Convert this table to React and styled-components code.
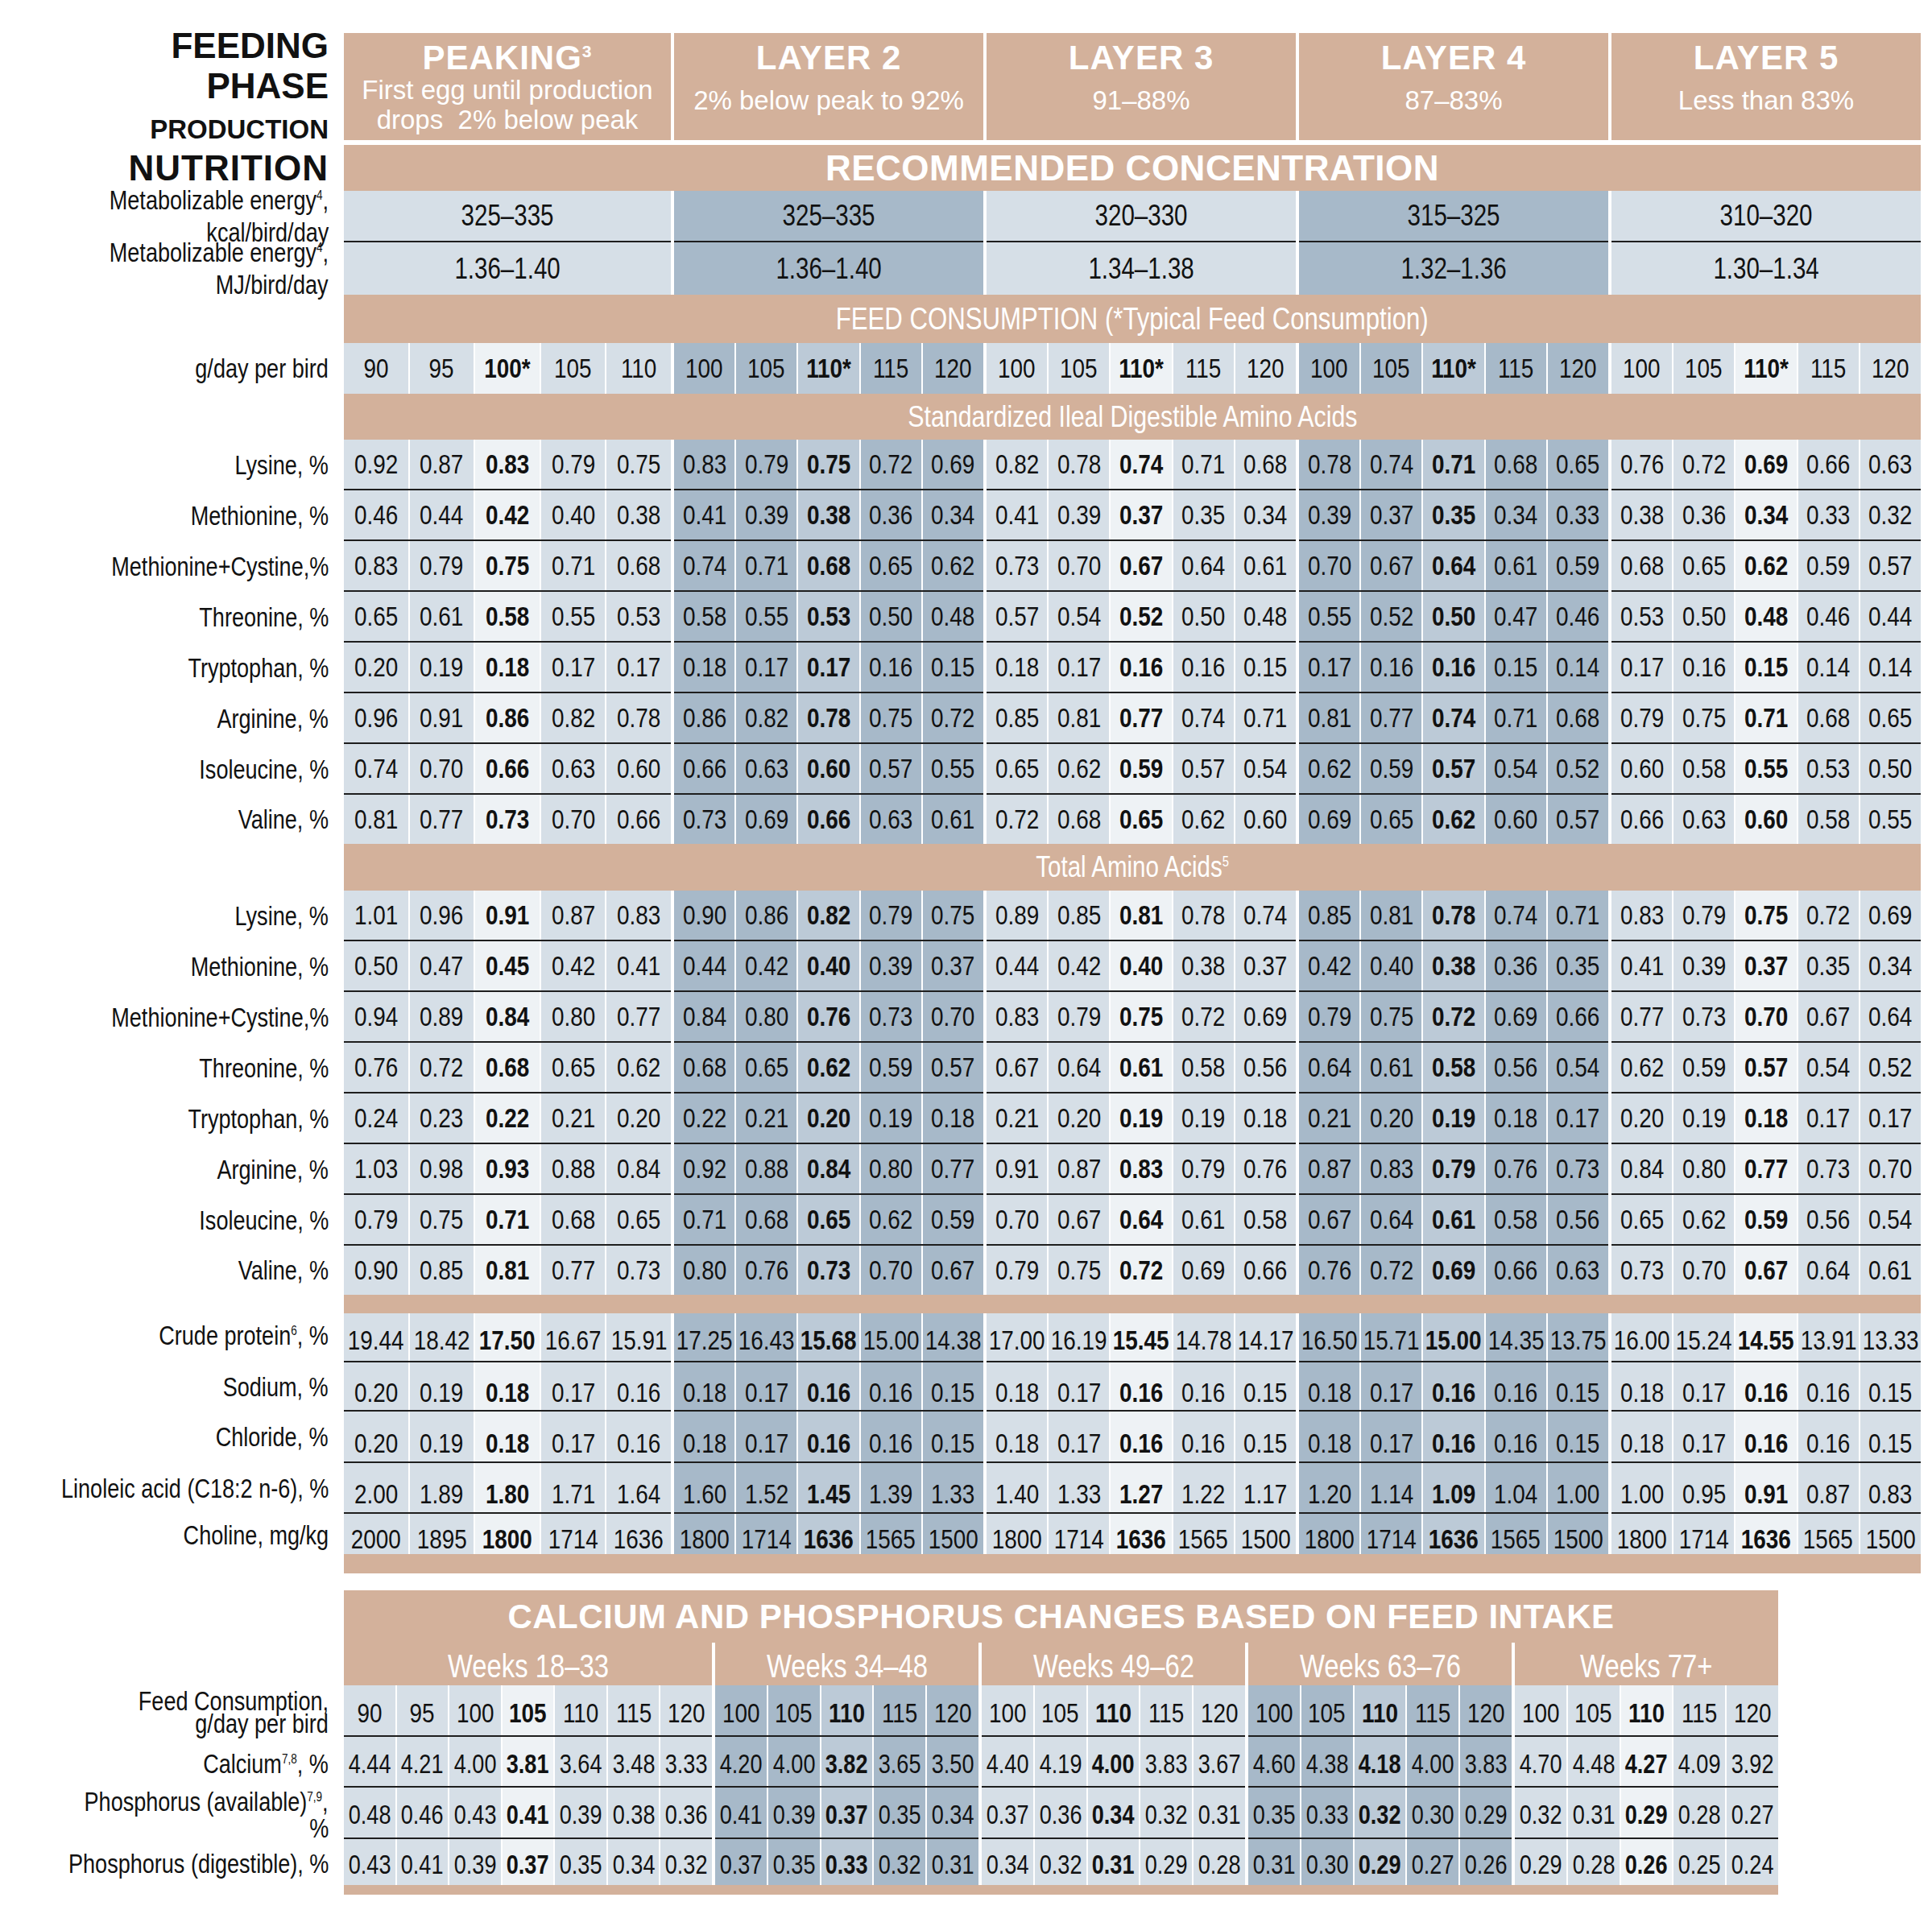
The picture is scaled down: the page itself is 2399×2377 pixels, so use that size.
import React from 'react';
import styled, { createGlobalStyle } from 'styled-components';

// no condensed face is installed, so the narrow look comes from a horizontal squeeze
const sans = '"Liberation Sans", Arial, sans-serif';

const BROWN = '#d3b19b';
const TONES = {
  light: '#d6dfe7',
  lightHi: '#eef2f5',
  dark: '#a7b9c9',
  darkHi: '#bccad7',
};

const GlobalStyle = createGlobalStyle`
  html, body {
    margin: 0;
    padding: 0;
    background: #fff;
  }
  body {
    font-family: ${sans};
    color: #111;
  }
`;

const Page = styled.div`
  width: 2399px;
  padding: 41px 0 24px;
  box-sizing: border-box;
`;

const MainGrid = styled.div`
  display: grid;
  grid-template-columns: 423px 406px repeat(4, 384px);
  column-gap: 4px;
`;

const MineralGrid = styled.div`
  display: grid;
  grid-template-columns: 423px 457px repeat(4, 327px);
  column-gap: 4px;
  margin-top: 21px;
`;

const Spacer = styled.div`
  grid-column: 1 / -1;
  height: ${(p) => p.$h}px;
`;

const Squeeze = styled.span`
  display: inline-block;
  white-space: nowrap;
  transform: translateY(${(p) => p.$dy || 0}px) scaleX(${(p) => p.$x || 0.82});
  transform-origin: ${(p) => p.$origin || 'center'};
`;

const Label = styled.div`
  height: ${(p) => (p.$h ? `${p.$h}px` : 'auto')};
  display: flex;
  flex-direction: column;
  align-items: flex-end;
  justify-content: center;
  padding-right: 15px;
  text-align: right;
  font-size: 33px;
  line-height: ${(p) => p.$lh || 40}px;
  color: #111;
  white-space: nowrap;
`;

const PhaseLabel = styled.div`
  height: 133px;
  padding-right: 15px;
  text-align: right;
  font-weight: 700;
  color: #111;
  white-space: nowrap;
`;

const BigWords = styled.div`
  font-size: 44px;
  line-height: 50px;
  margin-top: -9px;
`;

const SmallWord = styled.div`
  font-size: 33px;
  line-height: 40px;
  margin-top: 9px;
`;

const NutritionLabel = styled.div`
  height: 57px;
  padding-right: 15px;
  text-align: right;
  font-weight: 700;
  font-size: 44px;
  letter-spacing: 1px;
  line-height: 57px;
  color: #111;
`;

const Sup = styled.sup`
  font-size: 0.5em;
  line-height: 0;
  vertical-align: 0.72em;
`;

const PhaseHead = styled.div`
  height: 133px;
  box-sizing: border-box;
  padding-top: 10px;
  background: ${BROWN};
  color: #fff;
  display: flex;
  flex-direction: column;
  align-items: center;
  text-align: center;
`;

const PhaseTitle = styled.div`
  font-weight: 700;
  font-size: 42px;
  line-height: 42px;
  letter-spacing: 1px;
`;

const PhaseSub = styled.div`
  font-size: 33px;
  line-height: 37px;
  white-space: pre;
  margin-top: ${(p) => (p.$single ? 13 : 0)}px;
`;

const Band = styled.div`
  grid-column: 2 / -1;
  height: ${(p) => p.$h}px;
  background: ${BROWN};
  color: #fff;
  display: flex;
  align-items: center;
  justify-content: center;
  white-space: nowrap;
`;

const BandBold = styled.span`
  font-weight: 700;
  font-size: ${(p) => p.$size || 44}px;
  letter-spacing: 0.5px;
`;

const BandLight = styled(Squeeze)`
  font-size: ${(p) => p.$size || 37}px;
`;

const WeekHead = styled.div`
  height: 53px;
  background: ${BROWN};
  color: #fff;
  display: flex;
  align-items: center;
  justify-content: center;
  font-size: 40px;
`;

const Group = styled.div`
  display: grid;
  grid-template-columns: repeat(${(p) => p.$cols}, 1fr);
  column-gap: 2px;
  height: ${(p) => p.$h}px;
  box-sizing: border-box;
  border-bottom: ${(p) => (p.$line ? '2px solid #1e1e1e' : 'none')};
  background: #fff;
`;

const Cell = styled.div`
  min-width: 0;
  background: ${(p) => TONES[p.$tone]};
  display: flex;
  align-items: center;
  justify-content: center;
  font-size: ${(p) => p.$size || 34}px;
  font-weight: ${(p) => (p.$bold ? 700 : 400)};
  color: #111;
  white-space: nowrap;
`;

const PHASES = [
  { title: 'PEAKING', sup: '3', sub: ['First egg until production', 'drops\u00a0 2% below peak'] },
  { title: 'LAYER 2', sub: ['2% below peak to 92%'] },
  { title: 'LAYER 3', sub: ['91–88%'] },
  { title: 'LAYER 4', sub: ['87–83%'] },
  { title: 'LAYER 5', sub: ['Less than 83%'] },
];

const PHASE_GROUPS = [
  { cols: 5, tone: 'light', hi: 2, bold: 2 },
  { cols: 5, tone: 'dark', hi: 2, bold: 2 },
  { cols: 5, tone: 'light', hi: 2, bold: 2 },
  { cols: 5, tone: 'dark', hi: 2, bold: 2 },
  { cols: 5, tone: 'light', hi: 2, bold: 2 },
];

const WEEK_GROUPS = [
  { cols: 7, tone: 'light', hi: 3, bold: 3, title: 'Weeks 18–33' },
  { cols: 5, tone: 'dark', hi: 2, bold: 2, title: 'Weeks 34–48' },
  { cols: 5, tone: 'light', hi: -1, bold: 2, title: 'Weeks 49–62' },
  { cols: 5, tone: 'dark', hi: 2, bold: 2, title: 'Weeks 63–76' },
  { cols: 5, tone: 'light', hi: 2, bold: 2, title: 'Weeks 77+' },
];

const parse = (s) => s.split('|').map((g) => g.trim().split(/\s+/));

const FEED = parse('90 95 100* 105 110 | 100 105 110* 115 120 | 100 105 110* 115 120 | 100 105 110* 115 120 | 100 105 110* 115 120');

const SID = [
  ['Lysine, %', '0.92 0.87 0.83 0.79 0.75 | 0.83 0.79 0.75 0.72 0.69 | 0.82 0.78 0.74 0.71 0.68 | 0.78 0.74 0.71 0.68 0.65 | 0.76 0.72 0.69 0.66 0.63'],
  ['Methionine, %', '0.46 0.44 0.42 0.40 0.38 | 0.41 0.39 0.38 0.36 0.34 | 0.41 0.39 0.37 0.35 0.34 | 0.39 0.37 0.35 0.34 0.33 | 0.38 0.36 0.34 0.33 0.32'],
  ['Methionine+Cystine,%', '0.83 0.79 0.75 0.71 0.68 | 0.74 0.71 0.68 0.65 0.62 | 0.73 0.70 0.67 0.64 0.61 | 0.70 0.67 0.64 0.61 0.59 | 0.68 0.65 0.62 0.59 0.57'],
  ['Threonine, %', '0.65 0.61 0.58 0.55 0.53 | 0.58 0.55 0.53 0.50 0.48 | 0.57 0.54 0.52 0.50 0.48 | 0.55 0.52 0.50 0.47 0.46 | 0.53 0.50 0.48 0.46 0.44'],
  ['Tryptophan, %', '0.20 0.19 0.18 0.17 0.17 | 0.18 0.17 0.17 0.16 0.15 | 0.18 0.17 0.16 0.16 0.15 | 0.17 0.16 0.16 0.15 0.14 | 0.17 0.16 0.15 0.14 0.14'],
  ['Arginine, %', '0.96 0.91 0.86 0.82 0.78 | 0.86 0.82 0.78 0.75 0.72 | 0.85 0.81 0.77 0.74 0.71 | 0.81 0.77 0.74 0.71 0.68 | 0.79 0.75 0.71 0.68 0.65'],
  ['Isoleucine, %', '0.74 0.70 0.66 0.63 0.60 | 0.66 0.63 0.60 0.57 0.55 | 0.65 0.62 0.59 0.57 0.54 | 0.62 0.59 0.57 0.54 0.52 | 0.60 0.58 0.55 0.53 0.50'],
  ['Valine, %', '0.81 0.77 0.73 0.70 0.66 | 0.73 0.69 0.66 0.63 0.61 | 0.72 0.68 0.65 0.62 0.60 | 0.69 0.65 0.62 0.60 0.57 | 0.66 0.63 0.60 0.58 0.55'],
];

const TOTAL = [
  ['Lysine, %', '1.01 0.96 0.91 0.87 0.83 | 0.90 0.86 0.82 0.79 0.75 | 0.89 0.85 0.81 0.78 0.74 | 0.85 0.81 0.78 0.74 0.71 | 0.83 0.79 0.75 0.72 0.69'],
  ['Methionine, %', '0.50 0.47 0.45 0.42 0.41 | 0.44 0.42 0.40 0.39 0.37 | 0.44 0.42 0.40 0.38 0.37 | 0.42 0.40 0.38 0.36 0.35 | 0.41 0.39 0.37 0.35 0.34'],
  ['Methionine+Cystine,%', '0.94 0.89 0.84 0.80 0.77 | 0.84 0.80 0.76 0.73 0.70 | 0.83 0.79 0.75 0.72 0.69 | 0.79 0.75 0.72 0.69 0.66 | 0.77 0.73 0.70 0.67 0.64'],
  ['Threonine, %', '0.76 0.72 0.68 0.65 0.62 | 0.68 0.65 0.62 0.59 0.57 | 0.67 0.64 0.61 0.58 0.56 | 0.64 0.61 0.58 0.56 0.54 | 0.62 0.59 0.57 0.54 0.52'],
  ['Tryptophan, %', '0.24 0.23 0.22 0.21 0.20 | 0.22 0.21 0.20 0.19 0.18 | 0.21 0.20 0.19 0.19 0.18 | 0.21 0.20 0.19 0.18 0.17 | 0.20 0.19 0.18 0.17 0.17'],
  ['Arginine, %', '1.03 0.98 0.93 0.88 0.84 | 0.92 0.88 0.84 0.80 0.77 | 0.91 0.87 0.83 0.79 0.76 | 0.87 0.83 0.79 0.76 0.73 | 0.84 0.80 0.77 0.73 0.70'],
  ['Isoleucine, %', '0.79 0.75 0.71 0.68 0.65 | 0.71 0.68 0.65 0.62 0.59 | 0.70 0.67 0.64 0.61 0.58 | 0.67 0.64 0.61 0.58 0.56 | 0.65 0.62 0.59 0.56 0.54'],
  ['Valine, %', '0.90 0.85 0.81 0.77 0.73 | 0.80 0.76 0.73 0.70 0.67 | 0.79 0.75 0.72 0.69 0.66 | 0.76 0.72 0.69 0.66 0.63 | 0.73 0.70 0.67 0.64 0.61'],
];

// label, values, row height, shift of the numbers, shift of the label
const OTHERS = [
  [<>Crude protein<Sup>6</Sup>, %</>, '19.44 18.42 17.50 16.67 15.91 | 17.25 16.43 15.68 15.00 14.38 | 17.00 16.19 15.45 14.78 14.17 | 16.50 15.71 15.00 14.35 13.75 | 16.00 15.24 14.55 13.91 13.33', 61, 4, -3],
  ['Sodium, %', '0.20 0.19 0.18 0.17 0.16 | 0.18 0.17 0.16 0.16 0.15 | 0.18 0.17 0.16 0.16 0.15 | 0.18 0.17 0.16 0.16 0.15 | 0.18 0.17 0.16 0.16 0.15', 61, 8, 0],
  ['Chloride, %', '0.20 0.19 0.18 0.17 0.16 | 0.18 0.17 0.16 0.16 0.15 | 0.18 0.17 0.16 0.16 0.15 | 0.18 0.17 0.16 0.16 0.15 | 0.18 0.17 0.16 0.16 0.15', 64, 8, 0],
  ['Linoleic acid (C18:2 n-6), %', '2.00 1.89 1.80 1.71 1.64 | 1.60 1.52 1.45 1.39 1.33 | 1.40 1.33 1.27 1.22 1.17 | 1.20 1.14 1.09 1.04 1.00 | 1.00 0.95 0.91 0.87 0.83', 63, 8, 0],
  ['Choline, mg/kg', '2000 1895 1800 1714 1636 | 1800 1714 1636 1565 1500 | 1800 1714 1636 1565 1500 | 1800 1714 1636 1565 1500 | 1800 1714 1636 1565 1500', 50, 6, 2],
];

const ENERGY = [
  ['kcal/bird/day', ['325–335', '325–335', '320–330', '315–325', '310–320'], 64, true],
  ['MJ/bird/day', ['1.36–1.40', '1.36–1.40', '1.34–1.38', '1.32–1.36', '1.30–1.34'], 65, false],
];

const MINERALS = [
  [['Feed Consumption,', 'g/day per bird'], '90 95 100 105 110 115 120 | 100 105 110 115 120 | 100 105 110 115 120 | 100 105 110 115 120 | 100 105 110 115 120', 64, true, 28],
  [[<>Calcium<Sup>7,8</Sup>, %</>], '4.44 4.21 4.00 3.81 3.64 3.48 3.33 | 4.20 4.00 3.82 3.65 3.50 | 4.40 4.19 4.00 3.83 3.67 | 4.60 4.38 4.18 4.00 3.83 | 4.70 4.48 4.27 4.09 3.92', 63, true, 40],
  [[<>Phosphorus (available)<Sup>7,9</Sup>,</>, '%'], '0.48 0.46 0.43 0.41 0.39 0.38 0.36 | 0.41 0.39 0.37 0.35 0.34 | 0.37 0.36 0.34 0.32 0.31 | 0.35 0.33 0.32 0.30 0.29 | 0.32 0.31 0.29 0.28 0.27', 64, true, 33],
  [['Phosphorus (digestible), %'], '0.43 0.41 0.39 0.37 0.35 0.34 0.32 | 0.37 0.35 0.33 0.32 0.31 | 0.34 0.32 0.31 0.29 0.28 | 0.31 0.30 0.29 0.27 0.26 | 0.29 0.28 0.26 0.25 0.24', 57, false, 40],
];

function RowLabel({ lines, h, lh, dy }) {
  const list = Array.isArray(lines) ? lines : [lines];
  return (
    <Label $h={h} $lh={lh}>
      {list.map((l, i) => (
        <Squeeze key={i} $origin="right" $dy={dy}>
          {l}
        </Squeeze>
      ))}
    </Label>
  );
}

function DataRow({ label, values, groups = PHASE_GROUPS, h = 63, line = true, size = 34, lh, dy = 0, ldy = 0 }) {
  return (
    <>
      <RowLabel lines={label} h={h} lh={lh} dy={ldy} />
      {groups.map((g, gi) => (
        <Group key={gi} $cols={g.cols} $h={h} $line={line}>
          {values[gi].map((v, ci) => (
            <Cell
              key={ci}
              $tone={ci === g.hi ? `${g.tone}Hi` : g.tone}
              $bold={ci === g.bold}
              $size={size}
            >
              <Squeeze $dy={dy}>{v}</Squeeze>
            </Cell>
          ))}
        </Group>
      ))}
    </>
  );
}

function EnergyRow({ unit, values, h, line }) {
  return (
    <>
      <RowLabel lines={[<>Metabolizable energy<Sup>4</Sup>,</>, unit]} h={h} />
      {PHASE_GROUPS.map((g, gi) => (
        <Group key={gi} $cols={1} $h={h} $line={line}>
          <Cell $tone={g.tone} $size={36}>
            <Squeeze>{values[gi]}</Squeeze>
          </Cell>
        </Group>
      ))}
    </>
  );
}

function AminoBlock({ rows }) {
  return rows.map(([label, vals], i) => (
    <DataRow
      key={i}
      label={label}
      values={parse(vals)}
      h={i === rows.length - 1 ? 61 : 63}
      line={i !== rows.length - 1}
    />
  ));
}

export default function App() {
  return (
    <>
      <GlobalStyle />
      <Page>
        <MainGrid>
          <PhaseLabel>
            <BigWords>
              FEEDING
              <br />
              PHASE
            </BigWords>
            <SmallWord>PRODUCTION</SmallWord>
          </PhaseLabel>
          {PHASES.map((p) => (
            <PhaseHead key={p.title}>
              <PhaseTitle>
                {p.title}
                {p.sup && <Sup>{p.sup}</Sup>}
              </PhaseTitle>
              {p.sub.map((s) => (
                <PhaseSub key={s} $single={p.sub.length === 1}>
                  {s}
                </PhaseSub>
              ))}
            </PhaseHead>
          ))}

          <Spacer $h={6} />

          <NutritionLabel>NUTRITION</NutritionLabel>
          <Band $h={57}>
            <BandBold>RECOMMENDED CONCENTRATION</BandBold>
          </Band>

          {ENERGY.map(([unit, values, h, line]) => (
            <EnergyRow key={unit} unit={unit} values={values} h={h} line={line} />
          ))}

          <Label />
          <Band $h={60}>
            <BandLight $size={38}>FEED CONSUMPTION (*Typical Feed Consumption)</BandLight>
          </Band>

          <DataRow label="g/day per bird" values={FEED} line={false} />

          <Label />
          <Band $h={57}>
            <BandLight>Standardized Ileal Digestible Amino Acids</BandLight>
          </Band>
          <AminoBlock rows={SID} />

          <Label />
          <Band $h={58}>
            <BandLight $size={36}>
              Total Amino Acids<Sup>5</Sup>
            </BandLight>
          </Band>
          <AminoBlock rows={TOTAL} />

          <Label />
          <Band $h={23} />

          {OTHERS.map(([label, vals, h, dy, ldy], i) => (
            <DataRow
              key={i}
              label={label}
              values={parse(vals)}
              h={h}
              dy={dy}
              ldy={ldy}
              line={i !== OTHERS.length - 1}
            />
          ))}

          <Label />
          <Band $h={24} />
        </MainGrid>

        <MineralGrid>
          <Label />
          <Band $h={65}>
            <BandBold $size={42}>CALCIUM AND PHOSPHORUS CHANGES BASED ON FEED INTAKE</BandBold>
          </Band>

          <Label />
          {WEEK_GROUPS.map((g) => (
            <WeekHead key={g.title}>
              <Squeeze $dy={3}>{g.title}</Squeeze>
            </WeekHead>
          ))}

          {MINERALS.map(([lines, vals, h, line, lh], i) => (
            <DataRow
              key={i}
              label={lines}
              values={parse(vals)}
              groups={WEEK_GROUPS}
              h={h}
              line={line}
              size={i === 0 ? 34 : 33}
              lh={lh}
              dy={3}
              ldy={2}
            />
          ))}

          <Label />
          <Band $h={12} />
        </MineralGrid>
      </Page>
    </>
  );
}
